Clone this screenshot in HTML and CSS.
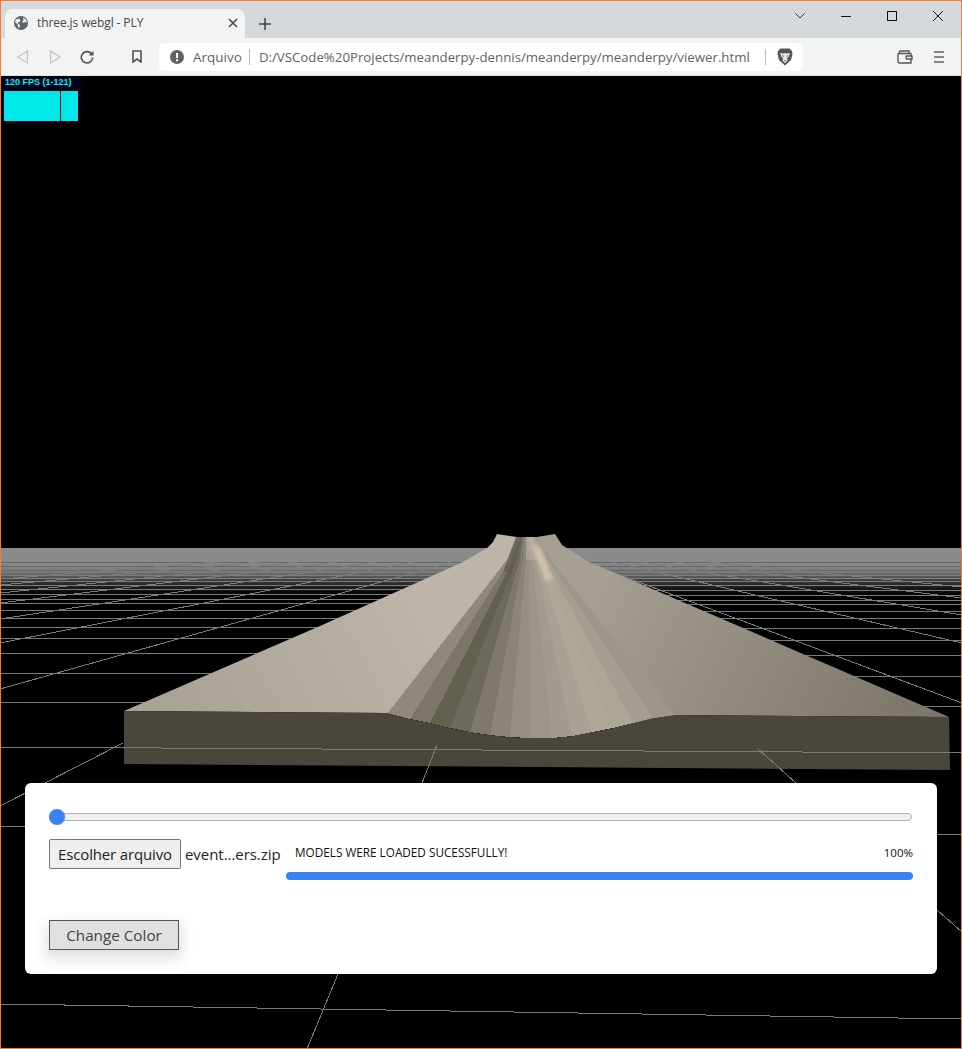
FILE: index.html
```html
<!DOCTYPE html>
<html lang="pt">
<head>
	<meta charset="UTF-8">
	<title>three.js webgl - PLY</title>
	<link rel="stylesheet" href="styles.css">
</head>
<body>
<div class="window">
	<div class="tabstrip">
		<div class="tab">
			<svg class="ico" width="14" height="14" viewBox="0 0 14 14"><circle cx="7" cy="7" r="7" fill="#5f6368"/><path d="M2 3.500 5 2.500 6.500 4 5.500 6 3.500 6.500 5 8.500 6 9 5.500 12 4 11 3.500 8 1 6zM9 1.500 12 3.500 13 6.500 11 6 9.500 7 8 5.500 9.500 4z" fill="#f2f3f3"/></svg>
			<span class="tab-title">three.js webgl - PLY</span>
			<svg class="tab-close" width="10" height="10" viewBox="0 0 10 10"><path d="M1 1 9 9M9 1 1 9" stroke="#4a4d51" stroke-width="1.600"/></svg>
		</div>
		<svg class="new-tab" width="12" height="12" viewBox="0 0 12 12"><path d="M6 0V12M0 6H12" stroke="#45484c" stroke-width="1.600"/></svg>
		<div class="win-controls">
			<svg class="win-btn" width="10" height="6" viewBox="0 0 10 6"><path d="M.5.5 5 5 9.500.5" fill="none" stroke="#333" stroke-width="1"/></svg>
			<svg class="win-btn" width="10" height="10" viewBox="0 0 10 10"><path d="M0 5.500H10" stroke="#111" stroke-width="1"/></svg>
			<svg class="win-btn" width="10" height="10" viewBox="0 0 10 10"><rect x=".5" y=".5" width="9" height="9" fill="none" stroke="#111"/></svg>
			<svg class="win-btn" width="10" height="10" viewBox="0 0 10 10"><path d="M0 0 10 10M10 0 0 10" stroke="#111" stroke-width="1"/></svg>
		</div>
	</div>
	<div class="toolbar">
		<svg class="tool tool-back" width="12" height="14" viewBox="0 0 12 14"><path d="M10.500 1V13L1 7z" fill="none" stroke="#c6c6c6" stroke-width="1.300"/></svg>
		<svg class="tool tool-fwd" width="12" height="14" viewBox="0 0 12 14"><path d="M1.500 1V13L11 7z" fill="none" stroke="#c9c5c0" stroke-width="1.300"/></svg>
		<svg class="tool tool-reload" width="14" height="14" viewBox="0 0 14 14"><path d="M11.800 4.200A5.700 5.700 0 1 0 12.700 7.500" fill="none" stroke="#4f5256" stroke-width="1.600"/><path d="M13.500 .8V5.500H8.800z" fill="#4f5256"/></svg>
		<svg class="tool tool-mark" width="10" height="13" viewBox="0 0 10 13"><path d="M1 1H9V12L5 9 1 12z" fill="none" stroke="#4f5256" stroke-width="1.600"/></svg>
		<div class="omnibox">
			<svg class="info" width="14" height="14" viewBox="0 0 14 14"><circle cx="7" cy="7" r="7" fill="#5f6368"/><path d="M6 3H8V8H6zM6 9.300H8V11.200H6z" fill="#fff"/></svg>
			<span class="scheme">Arquivo</span>
			<span class="url">D:/VSCode%20Projects/meanderpy-dennis/meanderpy/meanderpy/viewer.html</span>
			<svg class="brave" width="16" height="18" viewBox="0 0 16 18"><path d="M3.500 .5H12.500L15 3 15.500 6 14 12 8 17.500 2 12 .5 6 1 3z" fill="#55565a"/><path d="M3 5 6.500 5.500 8 5 9.500 5.500 13 5 11.500 9 10 10 10.500 12.500 8 15 5.500 12.500 6 10 4.500 9z" fill="#e9e9ea"/><path d="M5 7 7 8 6 9zM11 7 9 8 10 9zM6.800 12H9.200L8 13.300z" fill="#55565a"/></svg>
		</div>
		<svg class="wallet" width="16" height="14" viewBox="0 0 16 14"><path d="M2 3 3 1H12V3M1 3.500V11.500Q1 13 2.500 13H14V9M14 6V3.500H1M9.500 6H15V9H9.500Q8.500 7.500 9.500 6z" fill="none" stroke="#55565a" stroke-width="1.400"/></svg>
		<svg class="menu" width="10" height="12" viewBox="0 0 10 12"><path d="M0 1H10M0 6H10M0 11H10" stroke="#5f6368" stroke-width="1.600"/></svg>
	</div>
	<main class="viewport">
		<svg class="scene" width="960" height="972" viewBox="1 76 960 972">
			<defs>
				<linearGradient id="band" x1="0" y1="548" x2="0" y2="596" gradientUnits="userSpaceOnUse">
					<stop offset="0" stop-color="#8a8a8a"/>
					<stop offset=".3" stop-color="#8a8a8a"/>
					<stop offset=".5" stop-color="#7a7a7a"/>
					<stop offset=".68" stop-color="#3a3a3a"/>
					<stop offset=".9" stop-color="#0c0c0c"/>
					<stop offset="1" stop-color="#000"/>
				</linearGradient>
				<linearGradient id="slabLeft" x1="180" y1="720" x2="420" y2="590" gradientUnits="userSpaceOnUse">
					<stop offset="0" stop-color="#a9a395"/>
					<stop offset="1" stop-color="#bcb5a8"/>
				</linearGradient>
				<linearGradient id="slabRight" x1="600" y1="570" x2="900" y2="720" gradientUnits="userSpaceOnUse">
					<stop offset="0" stop-color="#a6a093"/>
					<stop offset="1" stop-color="#7d786a"/>
				</linearGradient>
				<linearGradient id="topShade" x1="0" y1="536" x2="0" y2="640" gradientUnits="userSpaceOnUse">
					<stop offset="0" stop-color="#d8d0c0" stop-opacity=".35"/>
					<stop offset="1" stop-color="#d8d0c0" stop-opacity="0"/>
				</linearGradient>
				<filter id="soft"><feGaussianBlur stdDeviation="2"/></filter>
			</defs>

			<rect x="0" y="548" width="962" height="48" fill="url(#band)"/>

			<g class="grid grid-far" shape-rendering="crispEdges">
				<path d="M0 562 962 562M0 566 962 566M0 570 962 571M0 573 962 574"/>
			</g>
			<g class="grid" shape-rendering="crispEdges">
				<path d="M0 575 962 576M0 578 962 579M0 581 962 582M0 585 962 586M0 589 962 591M0 594 962 596M0 599 962 601M0 603 962 605M0 610 962 612M0 618 962 619M0 627 962 629M0 638 962 641M0 653 962 656M0 673 962 677M0 702 962 707"/>
				<path d="M0 689 452 562M0 643 413 562M0 619 375 562M0 603 336 562M0 593 298 562M0 585 259 562M0 579 218 562M962 703 585 562M962 643 613 562M962 615 642 562M962 598 675 562M962 587 711 562"/>
			</g>

			<polygon points="380,713 530,738 685,716 560,560 545,537 510,537 500,560" fill="#9a9486"/>
			<polygon points="124,711 388,713 507,560 517,537 497,534 493,542 487,548 463,562 320,626" fill="url(#slabLeft)"/>
			<polygon points="675,715 949,717 720,618 587,561 562,545 555,534 537,537 551,560" fill="url(#slabRight)"/>

			<polygon points="124,711 388,713 410,719 430,723 450,728 470,732 490,735 510,737 530,738 552,738 572,736 592,732 613,728 633,723 653,718 675,715 949,717 950,770 124,764" fill="#4a463e"/>

			<g class="channel" shape-rendering="crispEdges">
				<polygon points="388,713 410,719 510.200,560 518.400,537 517,537 507,560" fill="#8f897c"/>
				<polygon points="410,719 430,723 513.400,560 519.900,537 518.400,537 510.200,560" fill="#7b7669"/>
				<polygon points="430,723 450,728 516.500,560 521.300,537 519.900,537 513.400,560" fill="#64604f"/>
				<polygon points="450,728 470,732 519.700,560 522.700,537 521.300,537 516.500,560" fill="#6d695c"/>
				<polygon points="470,732 490,735 522.900,560 524.100,537 522.700,537 519.700,560" fill="#7e796c"/>
				<polygon points="490,735 510,737 526,560 525.600,537 524.100,537 522.900,560" fill="#8a8577"/>
				<polygon points="510,737 530,738 529.200,560 527,537 525.600,537 526,560" fill="#948f81"/>
				<polygon points="530,738 552,738 532.400,560 528.400,537 527,537 529.200,560" fill="#9b9688"/>
				<polygon points="552,738 572,736 535.600,560 529.900,537 528.400,537 532.400,560" fill="#a29c8e"/>
				<polygon points="572,736 592,732 538.700,560 531.300,537 529.900,537 535.600,560" fill="#a8a294"/>
				<polygon points="592,732 613,728 541.900,560 532.700,537 531.300,537 538.700,560" fill="#aea899"/>
				<polygon points="613,728 633,723 545,560 534.100,537 532.700,537 541.900,560" fill="#aca697"/>
				<polygon points="633,723 653,718 548.200,560 535.600,537 534.100,537 545,560" fill="#a49e90"/>
				<polygon points="653,718 675,715 551,560 537,537 535.600,537 548.200,560" fill="#9d978a"/>
			</g>
			<g class="channel-light">
				<polygon points="526,560 538.700,560 532,537 526,537" fill="url(#topShade)"/>
				<polygon points="516,537 519,537 512,572 503,572" fill="#5f5b50" opacity=".7"/>
				<polygon points="533,546 540,547 553,580 545,580" fill="#e0cfb0" opacity=".75" filter="url(#soft)"/>
			</g>

			<g class="grid" shape-rendering="crispEdges">
				<path d="M0 747 962 753"/>
				<path d="M123 743 0 806M437 745 422 783M757 748 796 783"/>
				<path d="M0 826 962 835M937 910 962 932M0 1004 962 1019M338 974 307 1049"/>
			</g>
		</svg>

		<div class="stats">
			<div class="stats-label">120 FPS (1-121)</div>
			<div class="stats-graph"></div>
		</div>

		<section class="panel">
			<input class="slider" type="range" min="0" max="100" value="0">
			<div class="load-row">
				<button class="file-btn">Escolher arquivo</button>
				<span class="file-name">event...ers.zip</span>
				<div class="progress">
					<div class="progress-text">
						<span class="message">MODELS WERE LOADED SUCESSFULLY!</span>
						<span>100%</span>
					</div>
					<div class="progress-bar"></div>
				</div>
			</div>
			<button class="color-btn">Change Color</button>
		</section>
	</main>
</div>
</body>
</html>
```

FILE: styles.css
```css
* {
	box-sizing: border-box;
	margin: 0;
	padding: 0;
}

body {
	background: #000;
	font-family: "Open Sans", "Noto Sans", sans-serif;
	overflow: hidden;
}

.window {
	display: flex;
	flex-direction: column;
	width: 962px;
	height: 1049px;
	border: 1px solid #f47b30;
}

.tabstrip {
	display: flex;
	align-items: flex-end;
	height: 37px;
	background: #d6d9dc;
	padding-left: 4px;
}

.tab {
	display: flex;
	align-items: center;
	width: 240px;
	height: 29px;
	padding: 0 7px 2px 9px;
	background: #f2f3f3;
	border-radius: 8px 8px 0 0;
}

.tab-title {
	flex: 1;
	margin-left: 9px;
	font-size: 12px;
	letter-spacing: -0.1px;
	color: #45484c;
}

.new-tab {
	align-self: center;
	margin: 8px 0 0 14px;
}

.win-controls {
	display: flex;
	align-items: center;
	align-self: flex-start;
	gap: 36px;
	margin: 10px 0 0 auto;
	padding-right: 18px;
}

.toolbar {
	display: flex;
	align-items: center;
	height: 38px;
	background: #f2f3f3;
	border-bottom: 1px solid #e2e2e2;
}

.tool-back { margin-left: 16px; }
.tool-fwd { margin-left: 20px; }
.tool-reload { margin-left: 19px; }
.tool-mark { margin-left: 38px; }

.omnibox {
	display: flex;
	align-items: center;
	width: 644px;
	height: 28px;
	margin-left: 17px;
	padding-left: 11px;
	background: #fff;
	border-radius: 5px;
	font-size: 13.5px;
	color: #5f6368;
}

.scheme {
	margin-left: 9px;
	padding-right: 7px;
	border-right: 1px solid #bbb;
	line-height: 16px;
}

.url {
	width: 507px;
	margin-left: 9px;
	border-right: 1px solid #bbb;
	font-size: 13.25px;
	line-height: 16px;
	white-space: nowrap;
	overflow: hidden;
}

.brave { margin-left: 11px; }
.wallet { margin-left: 94px; }
.menu { margin-left: 21px; }

.viewport {
	position: relative;
	flex: 1;
	background: #000;
	overflow: hidden;
}

.scene {
	position: absolute;
	top: 0;
	left: 0;
}

.grid path {
	fill: none;
	stroke: #7c7c7c;
	stroke-width: 1;
}

.grid-far path {
	stroke: #686868;
}

.stats {
	position: absolute;
	top: 0;
	left: 0;
	width: 80px;
	height: 48px;
	padding: 1px 3px;
	background: #020218;
}

.stats-label {
	height: 14px;
	padding-left: 1px;
	font-family: "Liberation Sans", sans-serif;
	font-size: 9px;
	font-weight: bold;
	line-height: 11px;
	color: #00f0ff;
}

.stats-graph {
	width: 74px;
	height: 30px;
	background: linear-gradient(to right, #00e8e8 56px, #113 56px, #113 57px, #00e8e8 57px);
}

.panel {
	position: absolute;
	left: 24px;
	bottom: 74px;
	width: 912px;
	height: 191px;
	padding: 26px 24px 0;
	background: #fff;
	border-radius: 6px;
}

.slider {
	display: block;
	width: 863px;
	height: 16px;
	appearance: none;
	-webkit-appearance: none;
	background: transparent;
}

.slider::-webkit-slider-runnable-track {
	height: 8px;
	background: #efefef;
	border: 1px solid #b2b2b2;
	border-radius: 4px;
}

.slider::-webkit-slider-thumb {
	-webkit-appearance: none;
	width: 16px;
	height: 16px;
	margin: -5px 0 0 -1px;
	background: #3b82f6;
	border-radius: 50%;
}

.load-row {
	display: flex;
	margin-top: 14px;
}

.file-btn {
	width: 132px;
	height: 30px;
	background: #efefef;
	border: 1px solid #767676;
	border-radius: 2px;
	font-family: inherit;
	font-size: 15px;
	letter-spacing: -0.15px;
	color: #222;
}

.file-name {
	width: 101px;
	margin-left: 4px;
	font-size: 15px;
	letter-spacing: -0.05px;
	line-height: 30px;
	color: #222;
	white-space: nowrap;
}

.progress {
	width: 627px;
}

.progress-text {
	display: flex;
	justify-content: space-between;
	height: 33px;
	padding-left: 9px;
	font-size: 11.5px;
	line-height: 28px;
	color: #111;
}

.message {
	font-size: 11.75px;
	line-height: 26px;
}

.progress-bar {
	height: 8px;
	background: #3b82f6;
	border-radius: 4px;
}

.color-btn {
	display: block;
	width: 130px;
	height: 30px;
	margin-top: 40px;
	background: #e0e0e0;
	border: 1px solid #555;
	box-shadow: 0 6px 14px 3px rgba(0, 0, 0, 0.12);
	font-family: inherit;
	font-size: 15.25px;
	color: #444;
}
```
